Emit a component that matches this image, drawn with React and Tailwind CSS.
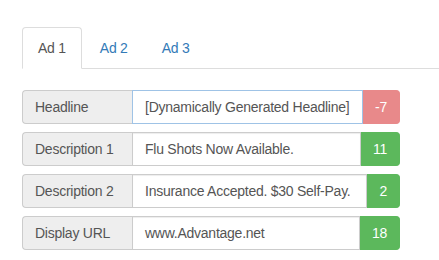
import React from 'react';

const tabs = ["Ad 1", "Ad 2", "Ad 3"];

const rows = [
  { label: "Headline", value: "[Dynamically Generated Headline]", count: "-7", bad: true },
  { label: "Description 1", value: "Flu Shots Now Available.", count: "11" },
  { label: "Description 2", value: "Insurance Accepted. $30 Self-Pay.", count: "2" },
  { label: "Display URL", value: "www.Advantage.net", count: "18" },
];

const App = () => (
  <div className="min-h-[260px] bg-white pt-[27px] pl-[22px] text-[14px] leading-5 tracking-[-0.25px] text-[#555]" style={{ fontFamily: '"Liberation Sans", Arial, sans-serif' }}>
    <ul className="flex border-b border-[#ddd]">
      {tabs.map((t, i) => (
        <li key={t} className="-mb-px mr-[2px]">
          <a
            className={
              i === 0
                ? "block rounded-t-[4px] border border-[#ddd] border-b-transparent bg-white px-[15px] py-[10px] text-[#555]"
                : "block rounded-t-[4px] border border-transparent px-[15px] py-[10px] text-[#337ab7]"
            }
          >
            {t}
          </a>
        </li>
      ))}
    </ul>

    <div className="mt-[21px] flex w-[378px] flex-col gap-2">
      {rows.map((r) => (
        <div key={r.label} className="flex h-[34px]">
          <span className="flex w-[110px] shrink-0 items-center whitespace-nowrap rounded-l-[4px] border border-r-0 border-[#ccc] bg-[#eee] px-3">
            {r.label}
          </span>
          <div
            className={
              r.bad
                ? "flex min-w-0 flex-1 items-center whitespace-nowrap border border-[#9fc3e6] bg-white px-3"
                : "flex min-w-0 flex-1 items-center whitespace-nowrap border border-[#ccc] bg-white px-3 shadow-[inset_0_1px_1px_rgba(0,0,0,0.075)]"
            }
          >
            {r.value}
          </div>
          <span
            className={
              r.bad
                ? "flex shrink-0 items-center rounded-r-[4px] border border-l-0 border-[#e8898a] bg-[#e8898a] px-3 text-white"
                : "flex shrink-0 items-center rounded-r-[4px] border border-l-0 border-[#5cb85c] bg-[#5cb85c] px-3 text-white"
            }
          >
            {r.count}
          </span>
        </div>
      ))}
    </div>
  </div>
);

export default App;
